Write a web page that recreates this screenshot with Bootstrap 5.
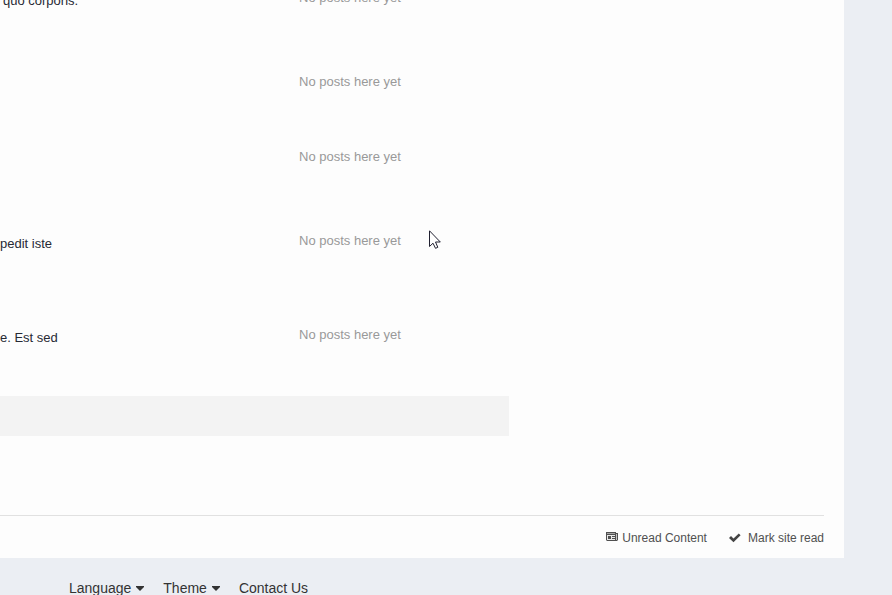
<!DOCTYPE html>
<html lang="en">
<head>
<meta charset="utf-8">
<meta name="viewport" content="width=device-width, initial-scale=1">
<title>Forums</title>
<link href="https://cdn.jsdelivr.net/npm/bootstrap@5.3.0/dist/css/bootstrap.min.css" rel="stylesheet">
<style>
body{background:#ebeef3;font:13px/20px "Liberation Sans",Arial,sans-serif;color:#272a34}
.page-clip{height:100vh}
.panel{background:#fdfdfd;margin-right:48px;padding-right:20px}
.forum-list{flex:0 0 509px;margin-top:-12px}
.forum-row{min-height:84px}
.forum-row.short{min-height:75px}
.forum-row.tall{min-height:94px}
.forum-row.last{min-height:71px}
.forum-info{flex:0 0 299px;padding-top:3px}
.forum-info.inset{padding-left:3px}
.latest{color:#999}
.list-end{background:#f3f3f3;height:40px}
.tools{margin-top:79px;border-top:1px solid #e1e1e1;padding:12px 0 10px;font-size:12px;gap:22px}
.tools a{color:#505050}
.news-icon{margin:0 4px 3px 0}
.mark-label{margin-left:7px}
.site-links{padding:20px 0 0 69px;gap:19px}
.site-links a,.site-menu{color:#333;font-size:14px;line-height:20px}
.caret{margin-left:5px}
.pointer{left:429px;top:230px}
</style>
<script src="https://cdn.jsdelivr.net/npm/bootstrap@5.3.0/dist/js/bootstrap.bundle.min.js"></script>
</head>
<body>
<div class="page-clip overflow-hidden position-relative">
<main class="panel">
  <div class="d-flex">
    <section class="forum-list">
      <div class="forum-row d-flex"><div class="forum-info inset">quo corporis.</div><div class="latest">No posts here yet</div></div>
      <div class="forum-row short d-flex"><div class="forum-info"></div><div class="latest">No posts here yet</div></div>
      <div class="forum-row d-flex"><div class="forum-info"></div><div class="latest">No posts here yet</div></div>
      <div class="forum-row tall d-flex"><div class="forum-info">pedit iste</div><div class="latest">No posts here yet</div></div>
      <div class="forum-row last d-flex"><div class="forum-info">e. Est sed</div><div class="latest">No posts here yet</div></div>
      <div class="list-end"></div>
    </section>
  </div>
  <nav class="tools d-flex justify-content-end" aria-label="Site tools">
    <a href="#" class="text-decoration-none d-flex align-items-center"><svg class="news-icon" width="12" height="9" viewBox="0 0 12 9" aria-hidden="true"><path fill="#505050" d="M0 0H10V1H12V8L11 9H1L0 8Z"/><path fill="#a5a5a5" d="M1 1H9V2H1Z"/><path fill="#e8e8e8" d="M1 3H9V4H1ZM5 4H6V8H5ZM6 5H9V6H6ZM1 4H2V8H1ZM2 7H9V8H2Z"/><path fill="#c4c4c4" d="M10 2H11V8H10Z"/></svg>Unread Content</a>
    <a href="#" class="text-decoration-none d-flex align-items-center"><svg width="12" height="10" viewBox="0 0 12 10" aria-hidden="true"><path fill="#444" d="M0 5L2 3L4.500 5.500L9.800 .5L11.600 2.300L4.500 9.300Z"/></svg><span class="mark-label">Mark site read</span></a>
  </nav>
</main>
<footer class="site-links d-flex">
  <button type="button" class="btn p-0 border-0 rounded-0 site-menu d-flex align-items-center">Language<svg class="caret" width="8" height="5" viewBox="0 0 8 5" aria-hidden="true"><path fill="#333" d="M0 0H8V1L4 5L0 1Z"/></svg></button>
  <button type="button" class="btn p-0 border-0 rounded-0 site-menu d-flex align-items-center">Theme<svg class="caret" width="8" height="5" viewBox="0 0 8 5" aria-hidden="true"><path fill="#333" d="M0 0H8V1L4 5L0 1Z"/></svg></button>
  <a href="#" class="text-decoration-none">Contact Us</a>
</footer>
<svg class="pointer position-absolute" width="12" height="19" viewBox="0 0 12 19" aria-hidden="true"><path fill="#fff" stroke="#202030" d="M.5 .8V16.500L4 13.200L6.500 18.300L8.800 17.300L6.500 12H11.300Z"/></svg>
</div>
</body>
</html>
